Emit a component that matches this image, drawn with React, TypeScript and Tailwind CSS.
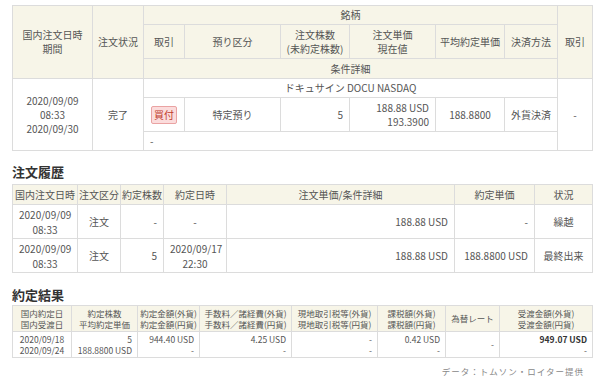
import React from 'react';

const th = 'border border-[#dcdcdc] bg-[#f7f5e8] font-normal text-center p-0 whitespace-nowrap';
const td = 'border border-[#dcdcdc] bg-white p-0 px-[6px] whitespace-nowrap';

function OrderTable() {
  return (
    <table className="w-[580px] table-fixed border-collapse text-[10px] leading-[14px] text-[#555]">
      <colgroup>
        <col className="w-[80px]" />
        <col className="w-[51px]" />
        <col className="w-[41px]" />
        <col className="w-[96px]" />
        <col className="w-[69px]" />
        <col className="w-[86px]" />
        <col className="w-[69px]" />
        <col className="w-[53px]" />
        <col className="w-[35px]" />
      </colgroup>
      <thead>
        <tr className="h-[19px]">
          <th rowSpan={3} className={th}>国内注文日時<br />期間</th>
          <th rowSpan={3} className={th}>注文状況</th>
          <th colSpan={6} className={th}>銘柄</th>
          <th rowSpan={3} className={th}>取引</th>
        </tr>
        <tr className="h-[34px]">
          <th className={th}>取引</th>
          <th className={th}>預り区分</th>
          <th className={th}>注文株数<br />(未約定株数)</th>
          <th className={th}>注文単価<br />現在値</th>
          <th className={th}>平均約定単価</th>
          <th className={th}>決済方法</th>
        </tr>
        <tr className="h-[20px]">
          <th colSpan={6} className={th}>条件詳細</th>
        </tr>
      </thead>
      <tbody>
        <tr className="h-[19px]">
          <td rowSpan={3} className={`${td} text-center`}>2020/09/09<br />08:33<br />2020/09/30</td>
          <td rowSpan={3} className={`${td} text-center`}>完了</td>
          <td colSpan={6} className={`${td} text-center`}>ドキュサイン DOCU NASDAQ</td>
          <td rowSpan={3} className={`${td} text-center`}>-</td>
        </tr>
        <tr className="h-[34px]">
          <td className={`${td} px-[7px]`}>
            <span className="inline-block rounded-[2px] border border-[#eaa3a3] bg-[#fbdcdc] px-[2px] leading-[16px] text-[#c0392b]">買付</span>
          </td>
          <td className={`${td} text-center`}>特定預り</td>
          <td className={`${td} text-right`}>5</td>
          <td className={`${td} text-right`}>188.88 USD<br />193.3900</td>
          <td className={`${td} text-center`}>188.8800</td>
          <td className={`${td} text-center`}>外貨決済</td>
        </tr>
        <tr className="h-[19px]">
          <td colSpan={6} className={`${td} text-left`}>-</td>
        </tr>
      </tbody>
    </table>
  );
}

function HistoryTable() {
  const rows = [
    { date: '2020/09/09', time: '08:33', kind: '注文', qty: '-', exec: ['-'], price: '188.88 USD', unit: '-', status: '繰越' },
    { date: '2020/09/09', time: '08:33', kind: '注文', qty: '5', exec: ['2020/09/17', '22:30'], price: '188.88 USD', unit: '188.8800 USD', status: '最終出来' },
  ];
  return (
    <table className="w-[580px] table-fixed border-collapse text-[10px] leading-[15px] text-[#555]">
      <colgroup>
        <col className="w-[65px]" />
        <col className="w-[43px]" />
        <col className="w-[43px]" />
        <col className="w-[63px]" />
        <col className="w-[228px]" />
        <col className="w-[80px]" />
        <col className="w-[58px]" />
      </colgroup>
      <thead>
        <tr className="h-[20px]">
          <th className={th}>国内注文日時</th>
          <th className={th}>注文区分</th>
          <th className={th}>約定株数</th>
          <th className={th}>約定日時</th>
          <th className={th}>注文単価/条件詳細</th>
          <th className={th}>約定単価</th>
          <th className={th}>状況</th>
        </tr>
      </thead>
      <tbody>
        {rows.map((r, i) => (
          <tr key={i} className="h-[34px]">
            <td className={`${td} text-center`}>{r.date}<br />{r.time}</td>
            <td className={`${td} text-center`}>{r.kind}</td>
            <td className={`${td} text-right`}>{r.qty}</td>
            <td className={`${td} text-center`}>
              {r.exec.map((e, j) => (
                <div key={j}>{e}</div>
              ))}
            </td>
            <td className={`${td} text-right`}>{r.price}</td>
            <td className={`${td} text-right`}>{r.unit}</td>
            <td className={`${td} text-center`}>{r.status}</td>
          </tr>
        ))}
      </tbody>
    </table>
  );
}

function ResultTable() {
  const c = 'border border-[#dcdcdc] bg-white p-0 px-[5px] whitespace-nowrap';
  return (
    <table className="w-[580px] table-fixed border-collapse text-[8.5px] leading-[11px] text-[#555]">
      <colgroup>
        <col className="w-[59px]" />
        <col className="w-[66px]" />
        <col className="w-[62px]" />
        <col className="w-[92px]" />
        <col className="w-[86px]" />
        <col className="w-[68px]" />
        <col className="w-[54px]" />
        <col className="w-[93px]" />
      </colgroup>
      <thead>
        <tr className="h-[26px]">
          <th className={th}>国内約定日<br />国内受渡日</th>
          <th className={th}>約定株数<br />平均約定単価</th>
          <th className={th}>約定金額(外貨)<br />約定金額(円貨)</th>
          <th className={th}>手数料／諸経費(外貨)<br />手数料／諸経費(円貨)</th>
          <th className={th}>現地取引税等(外貨)<br />現地取引税等(円貨)</th>
          <th className={th}>課税額(外貨)<br />課税額(円貨)</th>
          <th className={th}>為替レート</th>
          <th className={th}>受渡金額(外貨)<br />受渡金額(円貨)</th>
        </tr>
      </thead>
      <tbody>
        <tr className="h-[26px]">
          <td className={`${c} text-center`}>2020/09/18<br />2020/09/24</td>
          <td className={`${c} text-right`}>5<br />188.8800 USD</td>
          <td className={`${c} text-right`}>944.40 USD<br />-</td>
          <td className={`${c} text-right`}>4.25 USD<br />-</td>
          <td className={`${c} text-right`}>-<br />-</td>
          <td className={`${c} text-right`}>0.42 USD<br />-</td>
          <td className={`${c} text-right`}>-</td>
          <td className={`${c} text-right`}><span className="font-bold text-[#333]">949.07 USD</span><br />-</td>
        </tr>
      </tbody>
    </table>
  );
}

export default function App() {
  return (
    <div
      className="w-[600px] h-[382px] bg-white pl-3 pt-[5px]"
      style={{ fontFamily: '"Noto Sans CJK JP", "Noto Sans", sans-serif' }}
    >
      <OrderTable />
      <h2 className="mt-[13px] mb-[4px] text-[13px] leading-[16px] font-bold text-[#333]">注文履歴</h2>
      <HistoryTable />
      <h2 className="mt-[14px] mb-[2px] text-[13px] leading-[16px] font-bold text-[#333]">約定結果</h2>
      <ResultTable />
      <div className="w-[580px] pr-[8px] mt-[7px] text-right text-[8.5px] leading-[12px] tracking-[1px] text-[#888]">
        データ：トムソン・ロイター提供
      </div>
    </div>
  );
}
